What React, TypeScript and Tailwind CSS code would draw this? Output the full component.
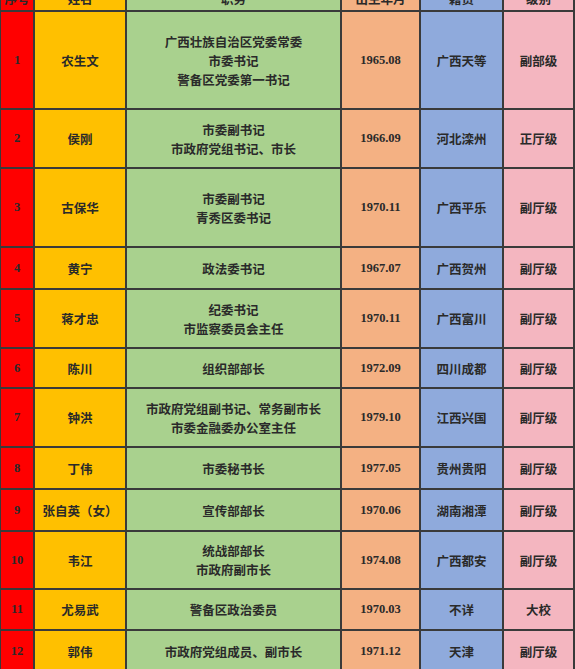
import React from 'react';

type Row = {
  no: number;
  name: string;
  duty: string[];
  born: string;
  home: string;
  level: string;
  h: string;
};

const ROWS: Row[] = [
  { no: 1, name: '农生文', duty: ['广西壮族自治区党委常委', '市委书记', '警备区党委第一书记'], born: '1965.08', home: '广西天等', level: '副部级', h: 'h-[98px]' },
  { no: 2, name: '侯刚', duty: ['市委副书记', '市政府党组书记、市长'], born: '1966.09', home: '河北滦州', level: '正厅级', h: 'h-[59px]' },
  { no: 3, name: '古保华', duty: ['市委副书记', '青秀区委书记'], born: '1970.11', home: '广西平乐', level: '副厅级', h: 'h-[79px]' },
  { no: 4, name: '黄宁', duty: ['政法委书记'], born: '1967.07', home: '广西贺州', level: '副厅级', h: 'h-[42px]' },
  { no: 5, name: '蒋才忠', duty: ['纪委书记', '市监察委员会主任'], born: '1970.11', home: '广西富川', level: '副厅级', h: 'h-[59px]' },
  { no: 6, name: '陈川', duty: ['组织部部长'], born: '1972.09', home: '四川成都', level: '副厅级', h: 'h-[40px]' },
  { no: 7, name: '钟洪', duty: ['市政府党组副书记、常务副市长', '市委金融委办公室主任'], born: '1979.10', home: '江西兴国', level: '副厅级', h: 'h-[59px]' },
  { no: 8, name: '丁伟', duty: ['市委秘书长'], born: '1977.05', home: '贵州贵阳', level: '副厅级', h: 'h-[42px]' },
  { no: 9, name: '张自英（女）', duty: ['宣传部部长'], born: '1970.06', home: '湖南湘潭', level: '副厅级', h: 'h-[42px]' },
  { no: 10, name: '韦江', duty: ['统战部部长', '市政府副市长'], born: '1974.08', home: '广西都安', level: '副厅级', h: 'h-[58px]' },
  { no: 11, name: '尤易武', duty: ['警备区政治委员'], born: '1970.03', home: '不详', level: '大校', h: 'h-[41px]' },
  { no: 12, name: '郭伟', duty: ['市政府党组成员、副市长'], born: '1971.12', home: '天津', level: '副厅级', h: 'h-[42px]' },
];

const cell = 'border-2 border-[#3a3a3a] text-center align-middle p-0';
const cjk = "font-['Noto_Sans_CJK_SC',sans-serif] font-bold text-[12.5px] leading-[19px] text-[#2a2a2a]";
const num = "font-['Liberation_Serif','Noto_Sans_CJK_SC',serif] font-bold text-[12.5px] text-[#2a2a2a]";

export default function App() {
  return (
    <div className="w-[575px] h-[669px] overflow-hidden bg-white">
      <table className="table-fixed border-collapse w-[573px] -mt-[16px] -ml-[1px]">
        <colgroup>
          <col className="w-[34px]" />
          <col className="w-[92px]" />
          <col className="w-[215px]" />
          <col className="w-[79px]" />
          <col className="w-[83px]" />
          <col className="w-[71px]" />
        </colgroup>
        <thead>
          <tr className="h-[26px]">
            <th className={`${cell} bg-[#ff0000] align-bottom ${cjk}`}>序号</th>
            <th className={`${cell} bg-[#ffc000] align-bottom ${cjk}`}>姓名</th>
            <th className={`${cell} bg-[#a9d18e] align-bottom ${cjk}`}>职务</th>
            <th className={`${cell} bg-[#f4b183] align-bottom ${cjk}`}>出生年月</th>
            <th className={`${cell} bg-[#8faadc] align-bottom ${cjk}`}>籍贯</th>
            <th className={`${cell} bg-[#f4b6c0] align-bottom ${cjk}`}>级别</th>
          </tr>
        </thead>
        <tbody>
          {ROWS.map((r) => (
            <tr key={r.no} className={r.h}>
              <td className={`${cell} bg-[#ff0000] ${num}`}>{r.no}</td>
              <td className={`${cell} bg-[#ffc000] ${cjk}`}>{r.name}</td>
              <td className={`${cell} bg-[#a9d18e] ${cjk}`}>
                {r.duty.map((d) => (
                  <div key={d}>{d}</div>
                ))}
              </td>
              <td className={`${cell} bg-[#f4b183] ${num}`}>{r.born}</td>
              <td className={`${cell} bg-[#8faadc] ${cjk}`}>{r.home}</td>
              <td className={`${cell} bg-[#f4b6c0] ${cjk}`}>{r.level}</td>
            </tr>
          ))}
        </tbody>
      </table>
    </div>
  );
}
